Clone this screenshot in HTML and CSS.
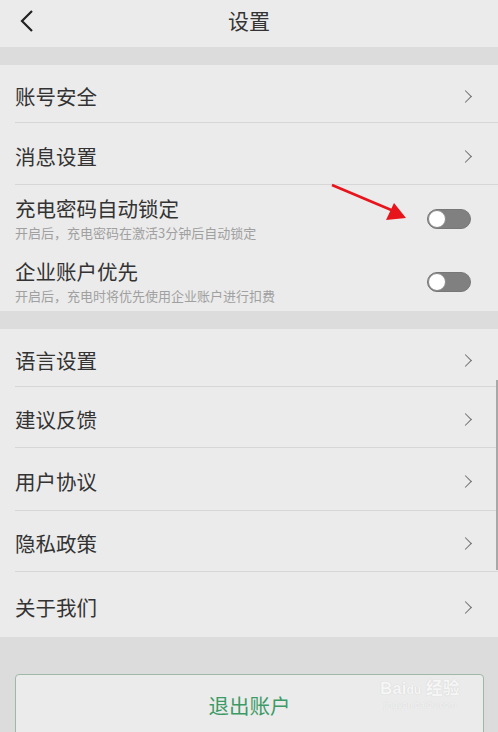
FILE: index.html
```html
<!DOCTYPE html>
<html lang="zh">
<head>
<meta charset="utf-8">
<link rel="stylesheet" href="styles.css">
</head>
<body>
<div class="page">
  <header class="topbar">
    <svg class="back" width="16" height="24" viewBox="0 0 16 24"><path d="M13 2 L3 12 L13 22" fill="none" stroke="#222" stroke-width="2.2"/></svg>
    <h1 class="title">设置</h1>
  </header>
  <div class="gap"></div>
  <section class="group">
    <div class="row r1"><span class="label">账号安全</span><span class="chev"></span></div>
    <div class="row r2"><span class="label">消息设置</span><span class="chev"></span></div>
    <div class="row toggle-row noline t1">
      <div class="texts"><span class="label">充电密码自动锁定</span><span class="sub">开启后，充电密码在激活3分钟后自动锁定</span></div>
      <span class="switch"><span class="knob"></span></span>
    </div>
    <div class="row toggle-row noline t2">
      <div class="texts"><span class="label">企业账户优先</span><span class="sub">开启后，充电时将优先使用企业账户进行扣费</span></div>
      <span class="switch"><span class="knob"></span></span>
    </div>
  </section>
  <div class="gap"></div>
  <section class="group">
    <div class="row r3"><span class="label">语言设置</span><span class="chev"></span></div>
    <div class="row r4"><span class="label">建议反馈</span><span class="chev"></span></div>
    <div class="row r4b"><span class="label">用户协议</span><span class="chev"></span></div>
    <div class="row r4"><span class="label">隐私政策</span><span class="chev"></span></div>
    <div class="row r5 noline"><span class="label">关于我们</span><span class="chev"></span></div>
  </section>
  <div class="bottom">
    <button class="logout">退出账户</button>
  </div>
  <div class="scrollbar"></div>
  <svg class="arrow" width="100" height="50" viewBox="0 0 100 50">
    <line x1="2" y1="2" x2="66" y2="29" stroke="#e8141c" stroke-width="2.6"/>
    <polygon points="76,35 56,37 64,20" fill="#e8141c"/>
  </svg>
  <div class="watermark"><span class="wm-big">Bai<span class="paw">du</span> 经验</span><span class="wm-small">jingyan.baidu.com</span></div>
</div>
</body>
</html>
```
FILE: styles.css
```css
* { box-sizing: border-box; margin: 0; padding: 0; }
html, body { width: 498px; height: 732px; overflow: hidden; }
body {
  background: #dcdcdc;
  font-family: "Noto Sans CJK SC", "Noto Sans", sans-serif;
  color: #333;
}
.page { position: relative; width: 498px; height: 732px; }
.topbar {
  height: 47px;
  background: #ebebeb;
  display: flex;
  align-items: center;
  justify-content: center;
  position: relative;
}
.back { position: absolute; left: 19px; top: 9px; }
.title {
  font-size: 21px;
  font-weight: 400;
  color: #333;
  line-height: 1;
  margin-top: -7px;
}
.gap { height: 18px; background: #dcdcdc; }
.group { background: #ebebeb; }
.row {
  display: flex;
  align-items: center;
  justify-content: space-between;
  margin-left: 15px;
  padding-right: 30px;
  padding-top: 5px;
  border-bottom: 1px solid #d6d6d6;
}
.row.noline { border-bottom: none; }
.r1 { height: 58px; }
.r2 { height: 62px; }
.r3 { height: 58px; }
.r4 { height: 61px; }
.r4b { height: 63px; }
.r5 { height: 65px; }
.label { font-size: 20.5px; color: #333; line-height: 1; }
.chev {
  width: 9px; height: 9px;
  border-top: 1.6px solid #6e6e6e;
  border-right: 1.6px solid #6e6e6e;
  transform: rotate(45deg);
  margin-right: -2px;
}
.texts { display: flex; flex-direction: column; gap: 7px; }
.sub { font-size: 13px; color: #a0a0a0; line-height: 1; }
.toggle-row { padding-right: 27px; }
.t1 { height: 63px; padding-top: 4px; }
.t2 { height: 63px; padding-top: 4px; padding-bottom: 0; }
.switch {
  width: 44px; height: 20px;
  border-radius: 10px;
  background: #808080;
  position: relative;
  border: 1px solid #777;
}
.t1 .switch { margin-top: 0; }
.t2 .switch { margin-top: 0; }
.knob {
  position: absolute; left: 0; top: 0;
  width: 18px; height: 18px;
  border-radius: 50%;
  background: #fff;
  border: 1.5px solid #8a8a8a;
}
.bottom { height: 95px; padding: 37px 14px 0 15px; background: #dcdcdc; }
.logout {
  width: 469px; height: 70px;
  border: 1px solid #9fb9a9;
  border-radius: 4px;
  background: #ebebeb;
  color: #3c9a66;
  font-family: "Noto Sans CJK SC", sans-serif;
  font-size: 20.5px;
  padding-bottom: 8px;
}
.scrollbar {
  position: absolute; right: 0; top: 380px;
  width: 2px; height: 190px; background: #a8a8a8;
}
.arrow { position: absolute; left: 330px; top: 183px; }
.watermark {
  position: absolute; left: 380px; top: 680px;
  display: flex; flex-direction: column; align-items: center;
  color: #f6f6f6;
  text-shadow: 0 0 1px #c8c8c8;
  font-family: "Liberation Sans", "Noto Sans CJK SC", sans-serif;
}
.wm-big { font-size: 17px; font-weight: 700; line-height: 1; }
.paw { font-size: 12px; }
.wm-small { font-size: 9px; line-height: 1.4; margin-top: 2px; }
```
